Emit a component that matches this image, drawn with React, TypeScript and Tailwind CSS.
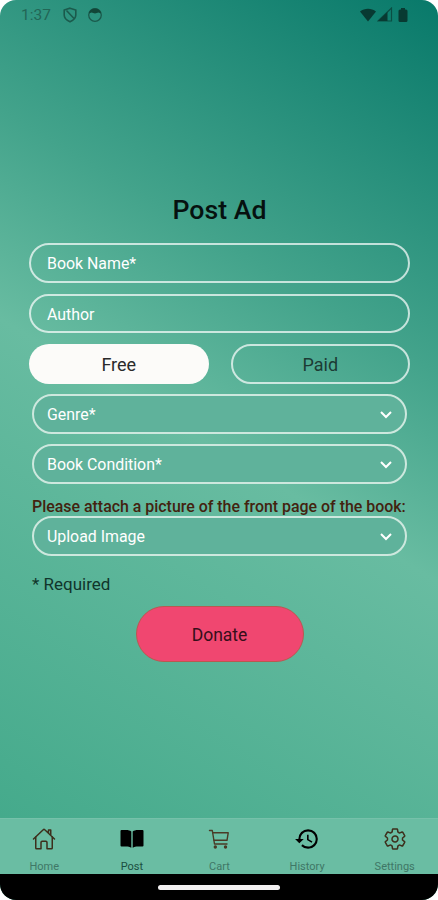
import type { ReactNode } from 'react'
import { IoHomeOutline, IoSettingsOutline } from 'react-icons/io5'
import { MdHistory } from 'react-icons/md'

interface Tab {
  label: string
  icon: ReactNode
  active?: boolean
}

const TABS: Tab[] = [
  { label: 'Home', icon: <IoHomeOutline size={24} className="text-[#3d2f1c]" /> },
  { label: 'Post', icon: <BookIcon />, active: true },
  { label: 'Cart', icon: <CartIcon /> },
  { label: 'History', icon: <MdHistory size={26} className="text-black" /> },
  { label: 'Settings', icon: <IoSettingsOutline size={24} className="text-[#3d2f1c]" /> },
]

export default function App() {
  return (
    <div className="bg-white font-[Roboto,sans-serif]">
      <div className="flex h-[900px] w-[438px] flex-col overflow-hidden rounded-[16px] bg-[linear-gradient(211deg,#08796a_0%,#43a38b_32%,#68bca1_50%,#3fa788_100%)]">
        <StatusBar />

        <main className="flex flex-1 flex-col pl-[29px] pr-[28px] pt-[165px]">
          <h1 className="text-center text-[26.700px] font-medium leading-8 text-[#06110f]">Post Ad</h1>

          <Field className="mt-[17px] h-10">Book Name*</Field>
          <Field className="mt-[11px] h-[39px]">Author</Field>

          <div className="mt-[11px] grid grid-cols-2 gap-[22px] text-[18px] text-[#1c3b34]">
            <button type="button" className="h-10 rounded-full bg-[#fcfbf9] pt-px text-[#2a2a2a]">Free</button>
            <button type="button" className="h-10 rounded-full border-2 border-white/70 pt-px">Paid</button>
          </div>

          <div className="px-[3px]">
            <Dropdown className="mt-[10px]">Genre*</Dropdown>
            <Dropdown className="mt-[10px]">Book Condition*</Dropdown>
            <p className="mt-[14px] whitespace-nowrap text-[15.920px] font-medium leading-[18px] text-[#43220f]">
              Please attach a picture of the front page of the book:
            </p>
            <Dropdown>Upload Image</Dropdown>
            <p className="mt-4 text-[17px] leading-6 text-[#10352b]">* Required</p>
          </div>

          <button
            type="button"
            className="mt-[10px] h-14 w-[168px] self-center rounded-full border border-[#b9594f] bg-[#f04770] pt-[3px] text-[17.500px] text-[#360e1a]"
          >
            Donate
          </button>
        </main>

        <TabBar />
        <div className="flex h-[26px] items-center justify-center bg-black">
          <div className="h-[5px] w-[122px] rounded-full bg-[#f2f0f1]" />
        </div>
      </div>
    </div>
  )
}

function StatusBar() {
  return (
    <header className="flex h-[29px] items-center justify-between pl-[21px] pr-[30px] text-[#1b5a4c]">
      <div className="flex items-center">
        <span className="w-[42px] text-[15.500px] leading-5 text-[#226656]">1:37</span>
        <svg width="14" height="16" viewBox="0 0 14 16" fill="none" stroke="currentColor" strokeWidth="1.600">
          <path d="M7 1.200 12.800 3v5c0 3-2.300 5.300-5.800 6.800C3.500 13.300 1.200 11 1.200 8V3z" />
          <path d="M3.500 3.500 11 11.500" />
        </svg>
        <svg className="ml-[10px]" width="16" height="16" viewBox="0 0 16 16">
          <circle cx="8" cy="8" r="6.300" fill="none" stroke="currentColor" strokeWidth="1.300" />
          <path d="M2 6.500C2.500 3 5 1.500 8 1.500s5.500 1.500 6 5L11.500 5.500 8 6.500 4.500 5.500z" fill="#124638" />
        </svg>
      </div>
      <div className="flex items-center text-[#083a32]">
        <svg width="18" height="14" viewBox="0 0 18 14" fill="currentColor">
          <path d="M1 3.500C5.500-.2 12.500-.2 17 3.500L9 13.500z" />
        </svg>
        <svg width="16" height="15" viewBox="0 0 16 15">
          <path d="M1 14 14.500 1v13z" fill="none" stroke="currentColor" strokeWidth="1.200" opacity=".7" />
          <path d="M1 14 10.500 5v9z" fill="currentColor" />
        </svg>
        <svg className="ml-[5px]" width="10" height="16" viewBox="0 0 10 16" fill="currentColor">
          <path d="M3 1h4v1.500h1A1.500 1.500 0 0 1 9.500 4v9.500A1.500 1.500 0 0 1 8 15H2A1.500 1.500 0 0 1 .5 13.500V4A1.500 1.500 0 0 1 2 2.500h1z" />
        </svg>
      </div>
    </header>
  )
}

function Field({ className, children }: { className: string; children: ReactNode }) {
  return (
    <div className={`flex items-center rounded-full border-2 border-white/70 px-4 pt-[2px] text-[15.900px] text-white ${className}`}>
      {children}
    </div>
  )
}

function Dropdown({ className = '', children }: { className?: string; children: ReactNode }) {
  return (
    <div
      className={`flex h-10 items-center justify-between rounded-full border-2 border-[#cde8de] bg-[#5fb29b] pl-[13px] pr-3 pt-px text-[15.900px] text-white ${className}`}
    >
      {children}
      <svg width="14" height="10" viewBox="0 0 14 10" fill="none" stroke="#fff" strokeWidth="2">
        <path d="M2 2l5 5 5-5" />
      </svg>
    </div>
  )
}

function BookIcon() {
  return (
    <svg width="24" height="20" viewBox="0 0 24 20" fill="black">
      <path d="M1.500 1h4.500c2.300 0 4 .5 5.300 1.500v16.300C10 17.900 8 17.500 6 17.500H1.500a1 1 0 0 1-1-1V2a1 1 0 0 1 1-1z" />
      <path d="M22.500 1H18c-2.300 0-4 .5-5.300 1.500v16.300c1.300-.9 3.300-1.300 5.300-1.300h4.500a1 1 0 0 0 1-1V2a1 1 0 0 0-1-1z" />
    </svg>
  )
}

function CartIcon() {
  return (
    <svg width="22" height="22" viewBox="0 0 22 22" fill="none" stroke="#4a3a26" strokeWidth="1.400" strokeLinejoin="round" strokeLinecap="round">
      <path d="M1.500 2.500h2.800L6.500 16H19" />
      <path d="M4.700 4.800h15.500l-1.200 7.500H6" />
      <circle cx="7.300" cy="19" r="1" fill="#4a3a26" />
      <circle cx="17.500" cy="19" r="1" fill="#4a3a26" />
    </svg>
  )
}

function TabBar() {
  return (
    <nav className="grid h-[56px] grid-cols-5 border-t border-[#76c1aa] bg-[#6abda3]">
      {TABS.map((tab) => (
        <div key={tab.label} className="flex flex-col items-center pl-px pt-2">
          <div className="flex h-6 items-center">{tab.icon}</div>
          <span className={`mt-[10px] text-[11px] leading-3 ${tab.active ? 'text-[#1b4f41]' : 'text-[#3f7766]'}`}>
            {tab.label}
          </span>
        </div>
      ))}
    </nav>
  )
}
